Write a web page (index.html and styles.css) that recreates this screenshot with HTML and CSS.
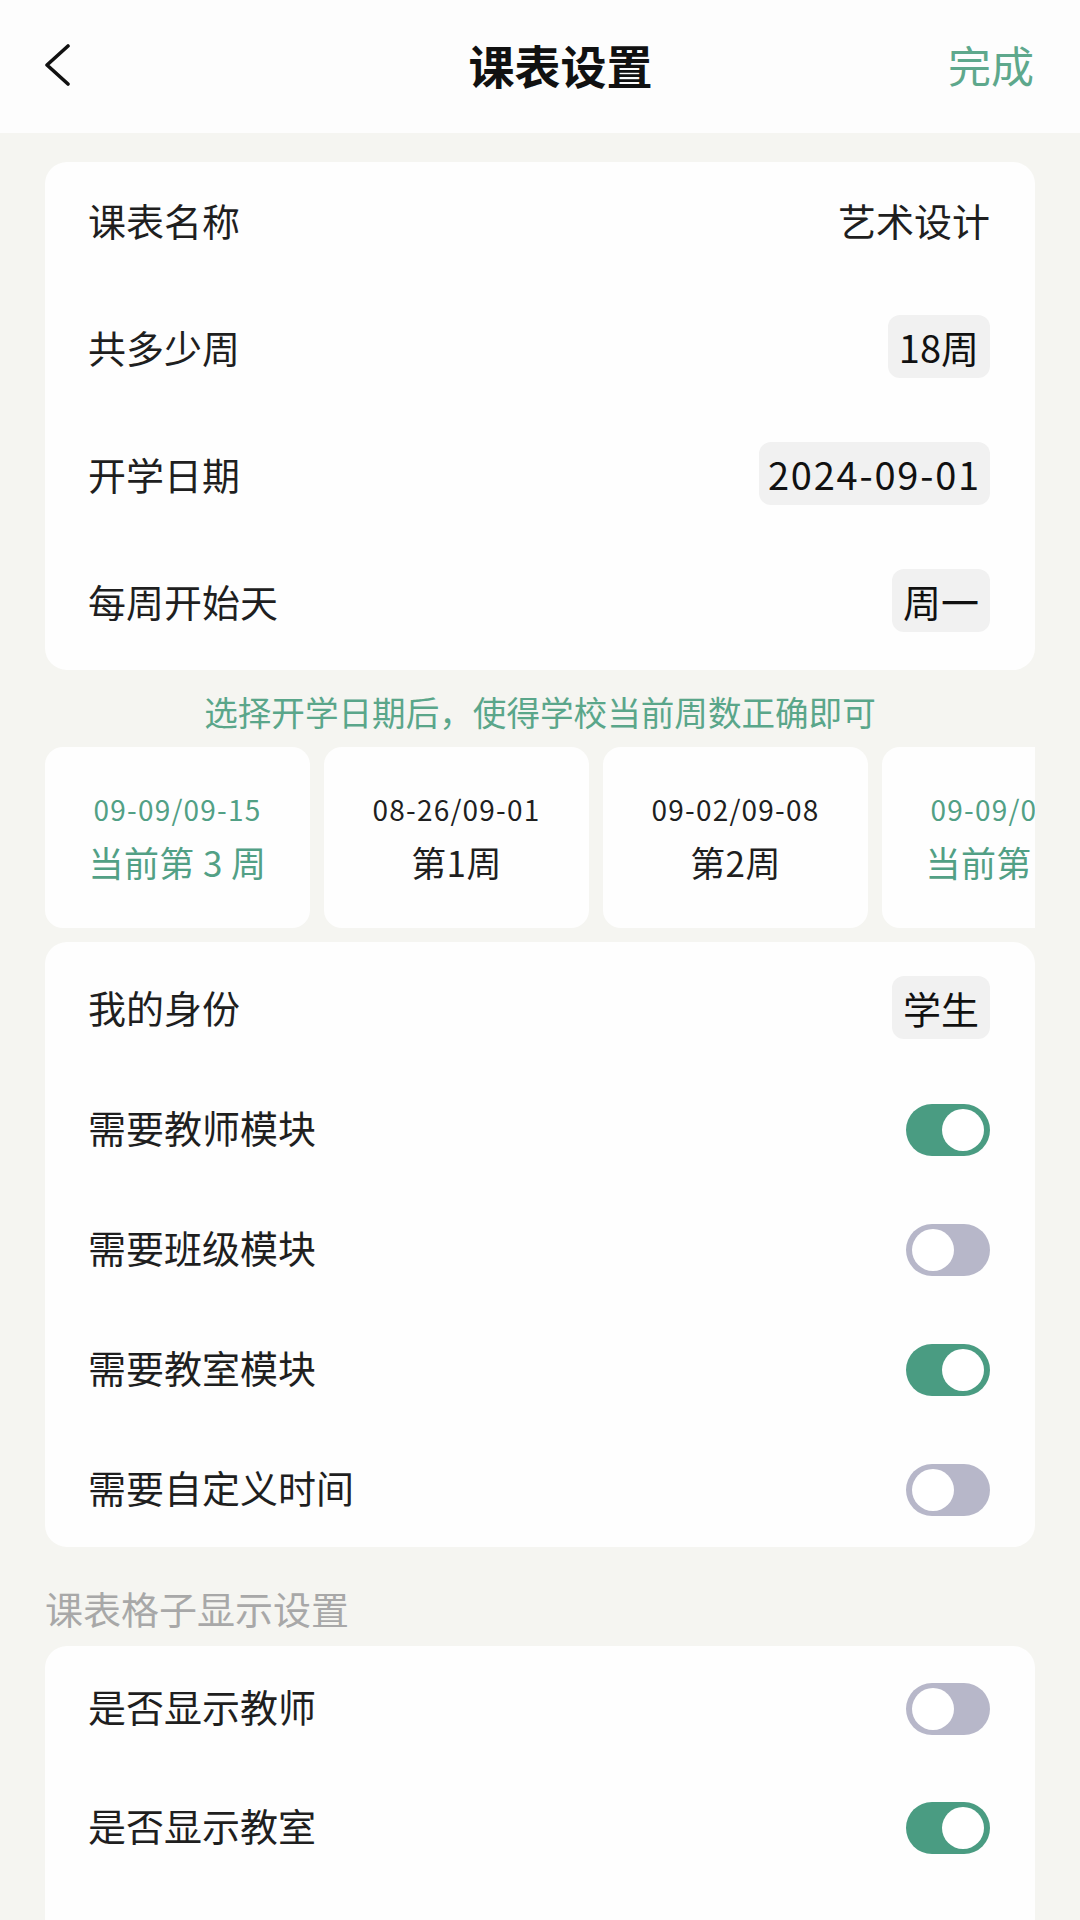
FILE: index.html
```html
<!DOCTYPE html>
<html lang="zh-CN">
<head>
  <meta charset="UTF-8" />
  <title>课表设置</title>
  <meta name="viewport" content="width=device-width, initial-scale=1.0" />
  <link rel="stylesheet" href="styles.css">
</head>
<body>

  <header class="nav-bar">
    <div class="nav-back">
      <svg width="26" height="42" viewBox="0 0 26 42">
        <polyline points="23,2 2,21 23,40" fill="none" stroke="#111" stroke-width="3.6" stroke-linecap="round" stroke-linejoin="round" />
      </svg>
    </div>
    <h1 class="nav-title">课表设置</h1>
    <div class="nav-done">完成</div>
  </header>

  <main class="content">

    <section class="card card-basic">
      <div class="row">
        <span class="label">课表名称</span>
        <span class="value">艺术设计</span>
      </div>
      <div class="row">
        <span class="label">共多少周</span>
        <span class="pill">18周</span>
      </div>
      <div class="row">
        <span class="label">开学日期</span>
        <span class="pill pill-date">2024-09-01</span>
      </div>
      <div class="row">
        <span class="label">每周开始天</span>
        <span class="pill">周一</span>
      </div>
    </section>

    <p class="hint">选择开学日期后，使得学校当前周数正确即可</p>

    <div class="week-list">
      <div class="week-card current">
        <div class="week-range">09-09/09-15</div>
        <div class="week-name">当前第 3 周</div>
      </div>
      <div class="week-card">
        <div class="week-range">08-26/09-01</div>
        <div class="week-name">第1周</div>
      </div>
      <div class="week-card">
        <div class="week-range">09-02/09-08</div>
        <div class="week-name">第2周</div>
      </div>
      <div class="week-card current">
        <div class="week-range">09-09/09-15</div>
        <div class="week-name">当前第 3 周</div>
      </div>
    </div>

    <section class="card card-modules">
      <div class="row">
        <span class="label">我的身份</span>
        <span class="pill">学生</span>
      </div>
      <div class="row">
        <span class="label">需要教师模块</span>
        <span class="toggle on"></span>
      </div>
      <div class="row">
        <span class="label">需要班级模块</span>
        <span class="toggle"></span>
      </div>
      <div class="row">
        <span class="label">需要教室模块</span>
        <span class="toggle on"></span>
      </div>
      <div class="row">
        <span class="label">需要自定义时间</span>
        <span class="toggle"></span>
      </div>
    </section>

    <h2 class="section-title">课表格子显示设置</h2>

    <section class="card card-display">
      <div class="row">
        <span class="label">是否显示教师</span>
        <span class="toggle"></span>
      </div>
      <div class="row">
        <span class="label">是否显示教室</span>
        <span class="toggle on"></span>
      </div>
      <div class="row">
        <span class="label">是否显示班级</span>
        <span class="toggle"></span>
      </div>
    </section>

  </main>

</body>
</html>
```

FILE: styles.css
```css
* {
  box-sizing: border-box;
}

body {
  margin: 0;
  font-family: "Noto Sans CJK SC", "Noto Sans", sans-serif;
  background-color: #f5f5f1;
  color: #1f1f1f;
  height: 1920px;
  overflow: hidden;
}

.nav-bar {
  display: grid;
  grid-template-columns: 1fr auto 1fr;
  align-items: center;
  height: 133px;
  padding: 0 46px 4px 45px;
  background: #fdfdfd;
}

.nav-back {
  display: flex;
  align-items: center;
}

.nav-title {
  margin: 0 0 0 42px;
  font-size: 46px;
  font-weight: 700;
  line-height: 1.2;
  color: #111;
}

.nav-done {
  justify-self: end;
  font-size: 43px;
  line-height: 1.2;
  color: #5ea88c;
}

.content {
  padding: 29px 45px 0;
}

.card {
  background: #fefefe;
  border-radius: 22px;
}

.row {
  display: flex;
  align-items: center;
  justify-content: space-between;
  padding: 0 45px 0 43px;
}

.card-basic .row {
  height: 127px;
  padding-bottom: 12px;
}

.card-modules {
  padding-top: 5px;
}

.card-modules .row {
  height: 120px;
}

.card-display .row {
  height: 119px;
}

.label,
.value {
  font-size: 38px;
  line-height: 1.2;
}

.pill {
  display: flex;
  align-items: center;
  height: 63px;
  padding: 0 11px;
  border-radius: 12px;
  background: #f1f1f1;
  font-size: 38px;
  color: #111;
}

.pill-date {
  padding: 0 9px;
  letter-spacing: 1.8px;
}

.hint {
  margin: 22px 0 15px;
  text-align: center;
  font-size: 33.6px;
  line-height: 40px;
  color: #5aa68a;
}

.week-list {
  display: flex;
  gap: 14px;
  overflow: hidden;
}

.week-card {
  flex: 0 0 265px;
  height: 181px;
  display: flex;
  flex-direction: column;
  align-items: center;
  justify-content: center;
  gap: 16px;
  background: #fefefe;
  border-radius: 18px;
  color: #1f1f1f;
}

.week-range {
  font-size: 28px;
  line-height: 32px;
  letter-spacing: 1.2px;
}

.week-name {
  font-size: 35px;
  line-height: 42px;
  letter-spacing: 0.4px;
}

.week-card.current {
  color: #52a085;
}

.card-modules {
  margin-top: 14px;
}

.section-title {
  margin: 38px 0 15px;
  font-size: 38px;
  font-weight: 400;
  line-height: 46px;
  color: #a8a8a8;
}

.toggle {
  position: relative;
  width: 84px;
  height: 52px;
  margin-top: 6px;
  border-radius: 26px;
  background: #b7b7c9;
}

.toggle::after {
  content: "";
  position: absolute;
  top: 5px;
  left: 6px;
  width: 42px;
  height: 42px;
  border-radius: 50%;
  background: #fff;
}

.toggle.on {
  background: #4a9c82;
}

.toggle.on::after {
  left: 36px;
}
```
